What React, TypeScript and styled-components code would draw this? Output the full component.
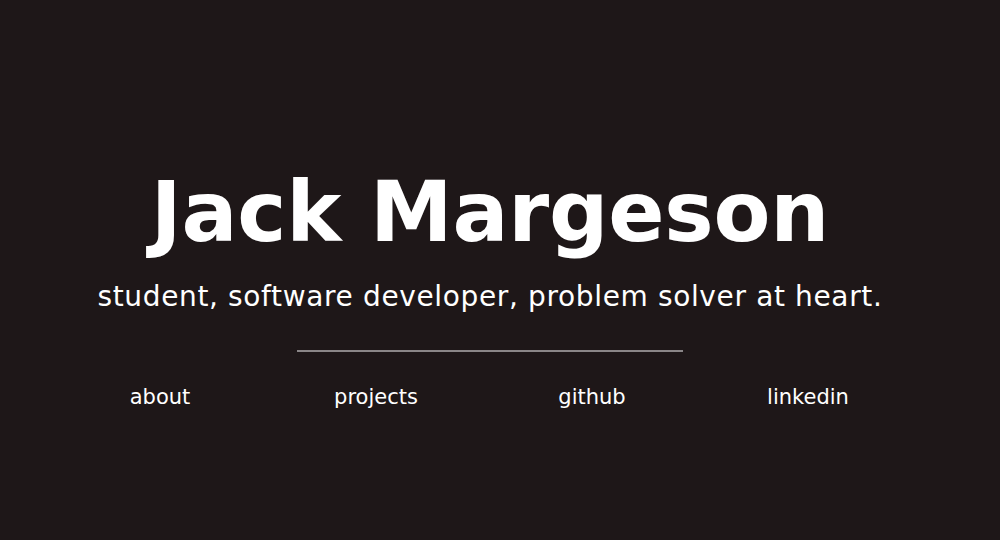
import styled, {createGlobalStyle} from "styled-components";
import React from "react";

const GlobalStyle = createGlobalStyle`
  html, body {
    margin: 0;
    padding: 0;
    background-color: #1e1718;
  }
`

const Page = styled.div`
  width: 980px;
  height: 540px;
  display: flex;
  flex-direction: column;
  align-items: center;
  font-family: "DejaVu Sans", "Liberation Sans", sans-serif;
  color: #ffffff;
`

const Title = styled.h1`
  margin: 168px 0 0;
  font-size: 83px;
  font-weight: bold;
  line-height: 90px;
  letter-spacing: -0.2px;
`

const Subtitle = styled.p`
  margin: 22px 0 0;
  font-size: 28px;
  line-height: 34px;
  letter-spacing: 0.64px;
`

const Divider = styled.hr`
  width: 386px;
  margin: 36px 0 0;
  border: none;
  border-top: 2px solid #8a8687;
`

const Links = styled.nav`
  margin-top: 28px;
  margin-left: -12px;
  display: grid;
  grid-template-columns: repeat(4, 216px);
`

const LinkItem = styled.a`
  text-align: center;
  font-size: 21px;
  line-height: 34px;
  color: #ffffff;
  text-decoration: none;
  cursor: pointer;
`

const App: React.FC = () => {
    return (
        <>
            <GlobalStyle/>
            <Page>
                <Title>Jack Margeson</Title>
                <Subtitle>student, software developer, problem solver at heart.</Subtitle>
                <Divider/>
                <Links>
                    <LinkItem>about</LinkItem>
                    <LinkItem>projects</LinkItem>
                    <LinkItem>github</LinkItem>
                    <LinkItem>linkedin</LinkItem>
                </Links>
            </Page>
        </>
    )
}

export default App;
